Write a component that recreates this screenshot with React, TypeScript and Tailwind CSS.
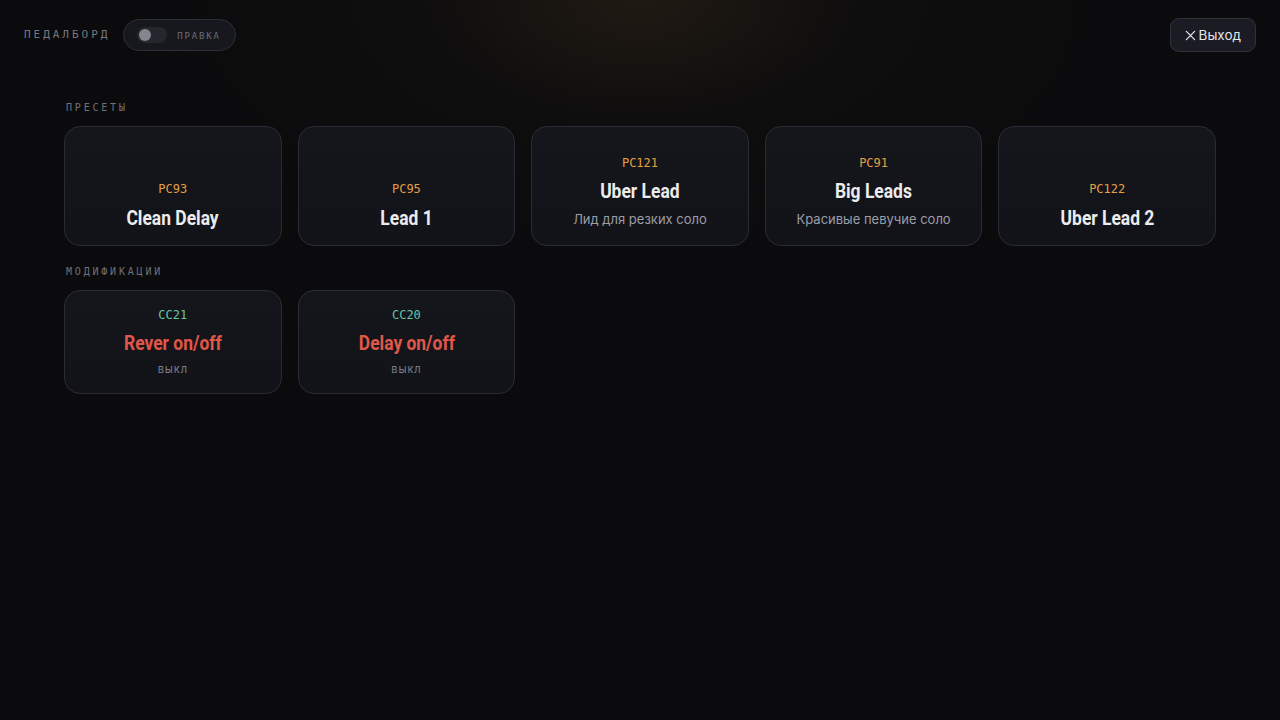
import React from "react";

type Preset = { pc: string; name: string; desc?: string };
type Mod = { cc: string; name: string; state: string };

const presets: Preset[] = [
  { pc: "PC93", name: "Clean Delay" },
  { pc: "PC95", name: "Lead 1" },
  { pc: "PC121", name: "Uber Lead", desc: "Лид для резких соло" },
  { pc: "PC91", name: "Big Leads", desc: "Красивые певучие соло" },
  { pc: "PC122", name: "Uber Lead 2" },
];

const mods: Mod[] = [
  { cc: "CC21", name: "Rever on/off", state: "выкл" },
  { cc: "CC20", name: "Delay on/off", state: "выкл" },
];

const mono = "font-['DejaVu_Sans_Mono','Liberation_Mono',monospace]";
const sans = "font-['Inter','Noto_Sans',sans-serif]";

// Condensed display title: Roboto bold squeezed horizontally
function Title({ children, color }: { children: React.ReactNode; color: string }) {
  return (
    <div className={`font-['Roboto',sans-serif] font-bold text-[21px] leading-[26px] scale-x-[0.83] whitespace-nowrap ${color}`}>
      {children}
    </div>
  );
}

function SectionLabel({ children }: { children: React.ReactNode }) {
  return (
    <div className={`${mono} text-[10px] tracking-[0.28em] text-[#6f7079] pl-[2px] h-[14px] leading-[14px]`}>
      {children}
    </div>
  );
}

function PresetCard({ p }: { p: Preset }) {
  return (
    <div
      className={`h-[120px] rounded-[16px] border border-[#2a2c34] bg-gradient-to-b from-[#15161b] to-[#121318] flex flex-col items-center justify-end ${
        p.desc ? "pb-[16px]" : "pb-[14px]"
      }`}
    >
      <div className={`${mono} text-[12px] text-[#e4a043] leading-[16px]`}>{p.pc}</div>
      <div className={p.desc ? "mt-[7px]" : "mt-[8px]"}>
        <Title color="text-[#ececee]">{p.name}</Title>
      </div>
      {p.desc && (
        <div className={`${sans} text-[13px] text-[#9c9da6] leading-[20px] mt-[5px]`}>{p.desc}</div>
      )}
    </div>
  );
}

function ModCard({ m }: { m: Mod }) {
  return (
    <div className="h-[104px] rounded-[16px] border border-[#2a2c34] bg-gradient-to-b from-[#15161b] to-[#121318] flex flex-col items-center pt-[16px]">
      <div className={`${mono} text-[12px] text-[#62c6a6] leading-[16px]`}>{m.cc}</div>
      <div className="mt-[7px]">
        <Title color="text-[#e0584a]">{m.name}</Title>
      </div>
      <div className={`${sans} text-[11px] tracking-[0.08em] text-[#7c7d86] leading-[16px] mt-[5px]`}>{m.state}</div>
    </div>
  );
}

export default function App() {
  return (
    <div className="min-h-[720px] w-full bg-[#0b0b0d] bg-[radial-gradient(ellipse_480px_260px_at_50%_0%,rgba(52,40,24,0.5),rgba(30,24,18,0.22)_45%,transparent_100%)]">
      <header className="flex items-center justify-between px-6 pt-[18px]">
        <div className="flex items-center gap-[13px] h-[33px]">
          <span className={`${mono} text-[11px] tracking-[0.27em] text-[#75767f]`}>ПЕДАЛБОРД</span>
          <div className="h-[32px] w-[113px] rounded-full border border-[#2c2e36] bg-[#17181e] flex items-center pl-[13px] gap-[10px]">
            <div className="h-[16px] w-[30px] rounded-full bg-[#26272e] flex items-center pl-[2px]">
              <div className="h-[12px] w-[12px] rounded-full bg-[#85868f]" />
            </div>
            <span className={`${mono} text-[9px] tracking-[0.2em] text-[#6d6e77] pt-[3px]`}>ПРАВКА</span>
          </div>
        </div>
        <button className={`${sans} h-[34px] pl-[14px] pr-[14px] rounded-[9px] border border-[#30323b] bg-[#1b1c23] flex items-center gap-[3px] text-[13.5px] text-[#e6e6ea]`}>
          <svg width="11" height="11" viewBox="0 0 12 12" fill="none" stroke="currentColor" strokeWidth="1.4" strokeLinecap="round">
            <path d="M1.5 1.5l9 9M10.5 1.5l-9 9" />
          </svg>
          Выход
        </button>
      </header>

      <main className="px-16 pt-[49px]">
        <SectionLabel>ПРЕСЕТЫ</SectionLabel>
        <div className="grid grid-cols-5 gap-4 mt-[11px]">
          {presets.map((p) => (
            <PresetCard key={p.pc} p={p} />
          ))}
        </div>

        <div className="mt-[19px]">
          <SectionLabel>МОДИФИКАЦИИ</SectionLabel>
        </div>
        <div className="grid grid-cols-5 gap-4 mt-[11px]">
          {mods.map((m) => (
            <ModCard key={m.cc} m={m} />
          ))}
        </div>
      </main>
    </div>
  );
}
